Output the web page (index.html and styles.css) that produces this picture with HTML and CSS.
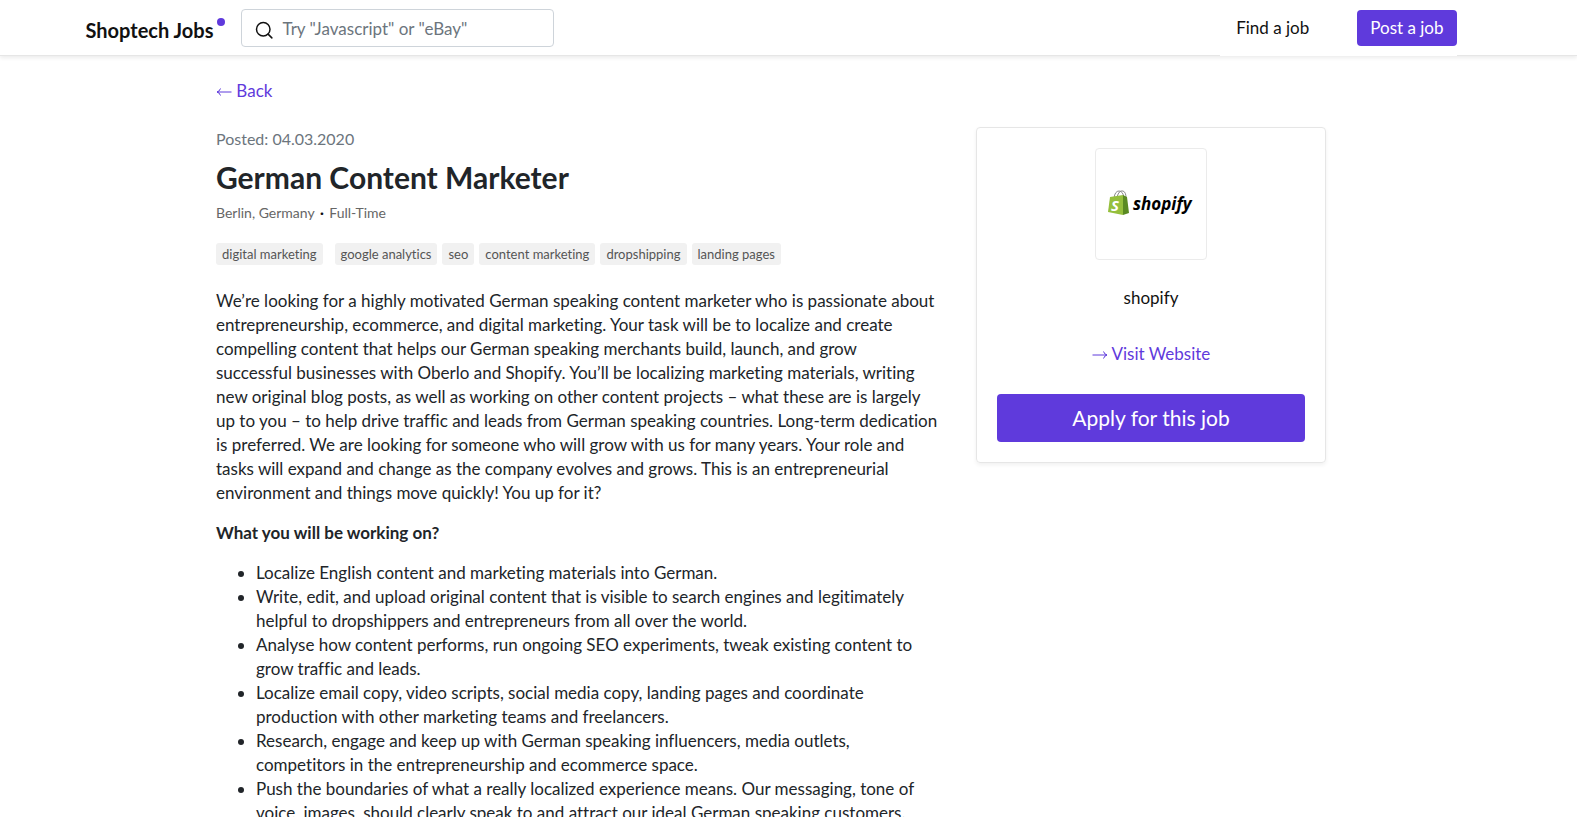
FILE: index.html
```html
<!DOCTYPE html>
<html lang="en">
<head>
  <meta charset="UTF-8" />
  <meta name="viewport" content="width=device-width, initial-scale=1" />
  <title>German Content Marketer - Shoptech Jobs</title>
  <link rel="stylesheet" href="styles.css">
</head>
<body>
  <header class="site-header">
    <div class="header-inner">
      <a class="brand" href="#">Shoptech Jobs<span class="brand-dot"></span></a>
      <form class="search">
        <svg class="search-icon" viewBox="0 0 24 24" aria-hidden="true">
          <circle cx="11" cy="11" r="9" />
          <path d="M17.500 17.500L22.500 22.500" />
        </svg>
        <input type="search" aria-label="Search jobs" placeholder='Try "Javascript" or "eBay"' />
      </form>
      <nav class="main-nav">
        <a class="nav-link" href="#">Find a job</a>
        <a class="btn" href="#">Post a job</a>
      </nav>
    </div>
  </header>

  <main class="container">
    <a class="back link" href="#">
      <svg class="arrow" viewBox="0 0 16 10" aria-hidden="true"><path d="M15.500 5H1M4.500 1.500Q3.500 4.500 1 5Q3.500 5.500 4.500 8.500" /></svg>
      Back
    </a>

    <div class="row">
      <article class="job">
        <p class="posted">Posted: 04.03.2020</p>
        <h1>German Content Marketer</h1>
        <p class="meta">Berlin, Germany <span class="sep">·</span> Full-Time</p>

        <ul class="tags">
          <li class="main-tag">digital marketing</li>
          <li>google analytics</li>
          <li>seo</li>
          <li>content marketing</li>
          <li>dropshipping</li>
          <li>landing pages</li>
        </ul>

        <div class="description">
          <p>
            We’re looking for a highly motivated German speaking content marketer who is passionate about<br>
            entrepreneurship, ecommerce, and digital marketing. Your task will be to localize and create<br>
            compelling content that helps our German speaking merchants build, launch, and grow<br>
            successful businesses with Oberlo and Shopify. You’ll be localizing marketing materials, writing<br>
            new original blog posts, as well as working on other content projects – what these are is largely<br>
            up to you – to help drive traffic and leads from German speaking countries. Long-term dedication<br>
            is preferred. We are looking for someone who will grow with us for many years. Your role and<br>
            tasks will expand and change as the company evolves and grows. This is an entrepreneurial<br>
            environment and things move quickly! You up for it?
          </p>
          <p><strong>What you will be working on?</strong></p>
          <ul>
            <li>Localize English content and marketing materials into German.</li>
            <li>Write, edit, and upload original content that is visible to search engines and legitimately helpful to dropshippers and entrepreneurs from all over the world.</li>
            <li>Analyse how content performs, run ongoing SEO experiments, tweak existing content to grow traffic and leads.</li>
            <li>Localize email copy, video scripts, social media copy, landing pages and coordinate production with other marketing teams and freelancers.</li>
            <li>Research, engage and keep up with German speaking influencers, media outlets,<br> competitors in the entrepreneurship and ecommerce space.</li>
            <li>Push the boundaries of what a really localized experience means. Our messaging, tone of voice, images, should clearly speak to and attract our ideal German speaking customers.</li>
          </ul>
        </div>
      </article>

      <aside class="company">
        <div class="logo">
          <svg viewBox="0 0 110 110" role="img" aria-label="shopify">
            <path d="M18 49Q19 42 23 42Q27 42 28 49M21 48Q23 41 27 42Q30 43 30 49" fill="none" stroke="#8b8b8b" stroke-width="1" />
            <path d="M14 48L27 46L27 66L12 63Z" fill="#95bf3c" />
            <path d="M27 46L31 48L33 64L27 66Z" fill="#5a8a22" />
            <text class="logo-s" x="15" y="62">S</text>
            <text class="logo-name" x="37" y="61">shopify</text>
          </svg>
        </div>
        <p class="company-name">shopify</p>
        <a class="visit link" href="#">
          <svg class="arrow" viewBox="0 0 16 10" aria-hidden="true"><path d="M0.500 5H15M11.500 1.500Q12.500 4.500 15 5Q12.500 5.500 11.500 8.500" /></svg>
          Visit Website
        </a>
        <button class="apply" type="button">Apply for this job</button>
      </aside>
    </div>
  </main>
</body>
</html>
```
FILE: styles.css
```css
:root {
  --purple: #5f3adc;
  --text: #212529;
  --muted: #6c757d;
  --border: #e6e6e6;
}

* {
  box-sizing: border-box;
}

body {
  margin: 0;
  height: 100vh;
  overflow: hidden;
  font-family: Lato, "Open Sans", sans-serif;
  font-size: 17px;
  line-height: 24px;
  font-variant-ligatures: none;
  color: var(--text);
  background: #fff;
}

a {
  color: inherit;
  text-decoration: none;
}

p {
  margin: 0 0 16px;
}

/* Header */
.site-header {
  height: 56px;
  padding-right: 35px;
  border-bottom: 1px solid var(--border);
  box-shadow: 0 2px 4px rgba(0, 0, 0, 0.08);
}

.header-inner {
  display: flex;
  align-items: center;
  max-width: 1371px;
  height: 56px;
  margin: 0 auto;
}

.brand {
  position: relative;
  margin-right: 28px;
  padding-top: 4px;
  font-size: 20px;
  font-weight: bold;
  color: #111;
}

.brand-dot {
  position: absolute;
  top: 4px;
  right: -12px;
  width: 8px;
  height: 8px;
  border-radius: 50%;
  background: var(--purple);
}

.search {
  position: relative;
  width: 313px;
}

.search input {
  display: block;
  width: 100%;
  height: 38px;
  padding: 0 12px 0 40px;
  border: 1px solid #ced4da;
  border-radius: 4px;
  font: inherit;
  color: var(--text);
}

.search input::placeholder {
  color: var(--muted);
  opacity: 1;
}

.search-icon {
  position: absolute;
  top: 12px;
  left: 14px;
  width: 18px;
  height: 18px;
  fill: none;
  stroke: #111;
  stroke-width: 2;
  stroke-linecap: round;
}

.main-nav {
  display: flex;
  align-items: center;
  gap: 48px;
  height: 56px;
  margin-left: auto;
  padding-left: 16px;
  background: #fff;
}

.nav-link {
  color: #111;
}

.btn {
  padding: 6px 13px;
  border-radius: 4px;
  background: var(--purple);
  color: #fff;
}

/* Job page */
.container {
  max-width: 1175px;
  margin: 0 auto;
  padding: 23px 50px 0 15px;
}

.link {
  color: var(--purple);
}

.back {
  display: inline-block;
  margin-bottom: 24px;
}

.arrow {
  width: 16px;
  height: 10px;
  fill: none;
  stroke: currentColor;
  stroke-width: 1;
}

.row {
  display: grid;
  grid-template-columns: minmax(0, 730fr) minmax(0, 350fr);
  gap: 30px;
  align-items: start;
}

.posted {
  margin-bottom: 8px;
  font-size: 16px;
  color: var(--muted);
}

h1 {
  margin: 0 0 8px;
  font-size: 30px;
  line-height: 36px;
}

.meta {
  margin-bottom: 20px;
  font-size: 14px;
  line-height: 20px;
  color: #666;
}

.sep {
  margin: 0 2px;
  font-weight: bold;
  color: #111;
}

.tags {
  display: flex;
  gap: 5px;
  margin: 0 0 24px;
  padding: 0;
  list-style: none;
}

.tags li {
  padding: 0 6px;
  border-radius: 3px;
  background: #f1f1f1;
  font-size: 13px;
  line-height: 22px;
  color: #555;
}

.tags .main-tag {
  margin-right: 7px;
}

.description ul {
  margin: 0;
  padding-left: 40px;
}

/* Company card */
.company {
  display: flex;
  flex-direction: column;
  align-items: center;
  padding: 20px;
  border: 1px solid var(--border);
  border-radius: 4px;
  box-shadow: 0 2px 4px rgba(0, 0, 0, 0.06);
}

.logo {
  width: 112px;
  height: 112px;
  border: 1px solid #ebebeb;
  border-radius: 4px;
}

.logo svg {
  display: block;
}

.logo-name {
  font-family: "Open Sans", sans-serif;
  font-size: 17px;
  font-weight: bold;
  font-style: italic;
  fill: #000;
}

.logo-s {
  font-family: "Open Sans", sans-serif;
  font-size: 15px;
  font-weight: bold;
  font-style: italic;
  fill: #fff;
}

.company-name {
  margin: 26px 0 32px;
  color: #111;
}

.visit {
  margin-bottom: 28px;
}

.apply {
  width: 100%;
  height: 48px;
  padding: 0 0 2px;
  border: 0;
  border-radius: 4px;
  background: var(--purple);
  font-family: inherit;
  font-size: 21px;
  color: #fff;
  cursor: pointer;
}
```
